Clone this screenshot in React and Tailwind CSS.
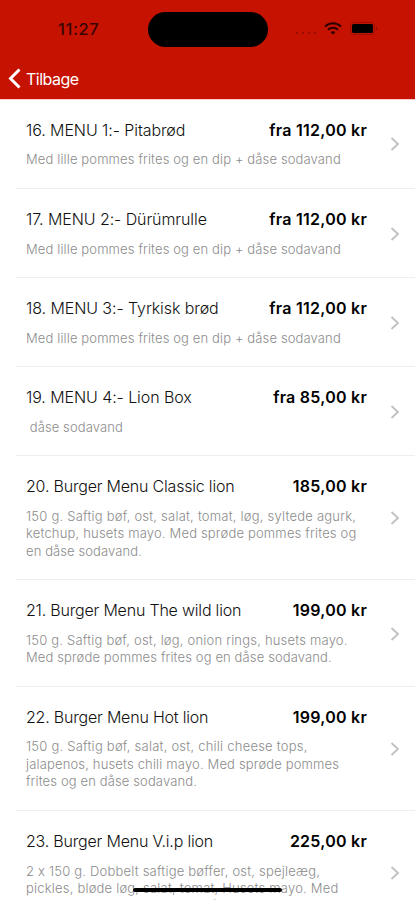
const items = [
  { title: '16. MENU 1:- Pitabrød', price: 'fra 112,00 kr', lines: [['Med lille pommes frites og en dip + dåse sodavand', 'tracking-[0.13px]']] },
  { title: '17. MENU 2:- Dürümrulle', price: 'fra 112,00 kr', lines: [['Med lille pommes frites og en dip + dåse sodavand', 'tracking-[0.13px]']] },
  { title: '18. MENU 3:- Tyrkisk brød', price: 'fra 112,00 kr', lines: [['Med lille pommes frites og en dip + dåse sodavand', 'tracking-[0.13px]']] },
  { title: '19. MENU 4:- Lion Box', price: 'fra 85,00 kr', lines: [[' dåse sodavand', 'tracking-[0.1px]']] },
  {
    title: '20. Burger Menu Classic lion',
    price: '185,00 kr',
    lines: [
      ['150 g. Saftig bøf, ost, salat, tomat, løg, syltede agurk,', 'tracking-[0.22px]'],
      ['ketchup, husets mayo. Med sprøde pommes frites og', 'tracking-[0.18px]'],
      ['en dåse sodavand.', 'tracking-[0.1px]'],
    ],
  },
  {
    title: '21. Burger Menu The wild lion',
    price: '199,00 kr',
    lines: [
      ['150 g. Saftig bøf, ost, løg, onion rings, husets mayo.', 'tracking-[0.2px]'],
      ['Med sprøde pommes frites og en dåse sodavand.', 'tracking-[0.13px]'],
    ],
  },
  {
    title: '22. Burger Menu Hot lion',
    price: '199,00 kr',
    lines: [
      ['150 g. Saftig bøf, salat, ost, chili cheese tops,', 'tracking-[0.23px]'],
      ['jalapenos, husets chili mayo. Med sprøde pommes', 'tracking-[0.16px]'],
      ['frites og en dåse sodavand.', 'tracking-[0.13px]'],
    ],
  },
  {
    title: '23. Burger Menu V.i.p lion',
    price: '225,00 kr',
    lines: [
      ['2 x 150 g. Dobbelt saftige bøffer, ost, spejleæg,', 'tracking-[0.2px]'],
      ['pickles, bløde løg, salat, tomat, Husets mayo. Med', 'tracking-[0.2px]'],
      ['sprøde pommes frites og en dåse sodavand.', 'tracking-[0.13px]'],
    ],
  },
]

function StatusBar() {
  return (
    <div className="flex h-[58px] items-center pl-[58px] pr-[37px]">
      <span className="w-[90px] text-[16.5px] font-medium tracking-[0.6px] text-[#3a0500]">11:27</span>
      <div className="mt-[1px] h-[35px] w-[120px] rounded-full bg-black" />
      <div className="mb-[2px] ml-auto flex items-center">
        <div className="mt-[10px] mr-[8px] flex gap-[4px]">
          <i className="size-[2px] rounded-full bg-[#8b0b00]" />
          <i className="size-[2px] rounded-full bg-[#8b0b00]" />
          <i className="size-[2px] rounded-full bg-[#8b0b00]" />
          <i className="size-[2px] rounded-full bg-[#8b0b00]" />
        </div>
        <svg width="18" height="13" viewBox="0 0 18 13" fill="none" stroke="#2a0300" strokeWidth="2">
          <path d="M1 4.6C5.5 0.1 12.5 0.1 17 4.6" />
          <path d="M4 7.8C6.8 5 11.2 5 14 7.8" />
          <path d="M9 12.6L6.6 10.2C8 9 10 9 11.4 10.2Z" fill="#2a0300" stroke="none" />
        </svg>
        <svg className="ml-[8px]" width="28" height="13" viewBox="0 0 28 13">
          <rect x="0.5" y="0.5" width="24" height="12" rx="3.5" fill="none" stroke="#a00e00" />
          <rect x="2" y="2" width="21" height="9" rx="1.5" fill="#000" />
          <path d="M26 4.5C27.6 5.2 27.6 7.8 26 8.5Z" fill="#8b0b00" />
        </svg>
      </div>
    </div>
  )
}

function MenuRow({ item }) {
  const isMenu = item.title.includes('MENU')

  return (
    <li className="ml-4 flex items-center border-b border-[#efefef] pt-[19.9px] pb-[19.1px] pl-[10px]">
      <div className="w-[341px]">
        <div className="flex h-5 items-center justify-between leading-5 whitespace-nowrap">
          <h2 className={`text-[16px] font-light text-[#111] ${isMenu ? 'tracking-[-0.08px]' : 'tracking-[-0.2px]'}`}>
            {item.title}
          </h2>
          <span className="text-[16px] font-semibold tracking-[0.25px] text-black">{item.price}</span>
        </div>
        <div className="mt-[11.6px] text-[13px] leading-[17.5px] font-light whitespace-pre text-[#8c8c8c]">
          {item.lines.map(([text, tracking]) => (
            <p key={text} className={tracking}>{text}</p>
          ))}
        </div>
      </div>
      <svg className="ml-[23px]" width="10" height="14" viewBox="0 0 10 14" fill="none" stroke="#c0c0c2" strokeWidth="1.8">
        <path d="M1.5 1L8 7L1.5 13" />
      </svg>
    </li>
  )
}

export default function App() {
  return (
    <div className="relative h-[900px] w-[415px] overflow-hidden bg-white font-['Inter',sans-serif] [font-feature-settings:'calt'_0]">
      <header className="h-[100px] border-b border-[#ffcdc9] bg-[#c61200]">
        <StatusBar />
        <button className="flex h-[40px] items-center pl-[8px] text-white">
          <svg width="13" height="21" viewBox="0 0 13 21" fill="none" stroke="#fff" strokeWidth="3">
            <path d="M11.5 1.5L2.5 10.5L11.5 19.5" />
          </svg>
          <span className="mt-[1px] ml-[5px] text-[16px] tracking-[-0.5px]">Tilbage</span>
        </button>
      </header>
      <ul>
        {items.map((item) => (
          <MenuRow key={item.title} item={item} />
        ))}
      </ul>
      <div className="absolute bottom-[8px] left-[133px] h-[4px] w-[149px] rounded-full bg-black" />
    </div>
  )
}
